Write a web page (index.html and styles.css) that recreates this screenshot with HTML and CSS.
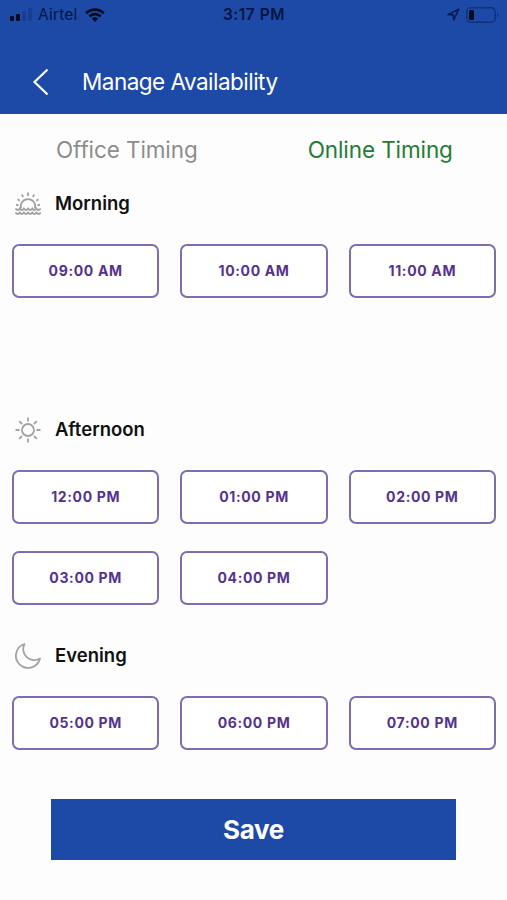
FILE: index.html
```html
<!DOCTYPE html>
<html lang="en">

<head>
    <meta charset="UTF-8">
    <meta name="viewport" content="width=device-width, initial-scale=1.0">
    <title>Manage Availability</title>
    <link rel="stylesheet" href="styles.css">
</head>
<body>
    <header class="header">
        <div class="status-bar">
            <div class="status-left">
                <svg class="signal" width="23" height="13" viewBox="0 0 23 13">
                    <rect x="0" y="8" width="4" height="5" rx="1"/>
                    <rect x="6" y="6" width="4" height="7" rx="1"/>
                    <rect class="dim" x="12" y="3" width="4" height="10" rx="1"/>
                    <rect class="dim" x="18" y="0" width="4" height="13" rx="1"/>
                </svg>
                <span class="carrier">Airtel</span>
                <svg class="wifi" width="20" height="14" viewBox="0 0 20 14">
                    <path d="M1.2 5.2a12.6 12.6 0 0 1 17.6 0M4.3 8.4a8.2 8.2 0 0 1 11.4 0" fill="none" stroke="#030b22" stroke-width="2.6"/>
                    <path d="M10 14l-3.3-3.4a4.8 4.8 0 0 1 6.6 0z"/>
                </svg>
            </div>
            <span class="clock">3:17 PM</span>
            <div class="status-right">
                <svg class="location" width="13" height="13" viewBox="0 0 13 13">
                    <path d="M1 6.6L11.6 1.2 6.8 12 6.3 6.9z" fill="none" stroke="#0a1d50" stroke-width="1.6" stroke-linejoin="round"/>
                </svg>
                <svg class="battery" width="33" height="16" viewBox="0 0 33 16">
                    <rect x=".8" y=".8" width="28.4" height="14.4" rx="4" fill="none" stroke="#133178" stroke-width="1.5"/>
                    <rect x="3" y="3" width="5" height="10" rx="1.5"/>
                    <path d="M31 5.500c2 .8 2 4.200 0 5z" fill="#133178"/>
                </svg>
            </div>
        </div>
        <div class="nav">
            <svg class="back" width="18" height="28" viewBox="0 0 18 28">
                <path d="M15.500 1.500L2.500 14l13 12.500" fill="none" stroke="#fff" stroke-width="2.2"/>
            </svg>
            <h1>Manage Availability</h1>
        </div>
    </header>

    <div class="tabs">
        <div class="tab">Office Timing</div>
        <div class="tab active">Online Timing</div>
    </div>

    <div class="section">
        <div class="section-title">
            <svg class="icon" width="28" height="28" viewBox="0 0 28 28">
                <path d="M7 18.500a7.300 7.300 0 1 1 14 0"/>
                <path d="M14 2.500v3.500M7.800 4.500l1.300 2.700M20.200 4.500l-1.300 2.700M3.500 9.200l2.300 1.500M24.500 9.200l-2.300 1.500M2 15h2.500M26 15h-2.500"/>
                <path d="M1.500 18.500q2.100 3 4.200 0q2.100 3 4.200 0q2.100 3 4.200 0q2.100 3 4.200 0q2.100 3 4.200 0q2.100 3 4.200 0M1.500 22.500q2.100 3 4.200 0q2.100 3 4.200 0q2.100 3 4.200 0q2.100 3 4.200 0q2.100 3 4.200 0q2.100 3 4.200 0"/>
            </svg>
            <h2>Morning</h2>
        </div>
        <div class="slots">
            <button>09:00 AM</button>
            <button>10:00 AM</button>
            <button>11:00 AM</button>
        </div>
    </div>

    <div class="section">
        <div class="section-title">
            <svg class="icon" width="28" height="28" viewBox="0 0 28 28">
                <circle cx="14" cy="14" r="6"/>
                <path d="M14 1.500v4M14 22.500v4M1.500 14h4M22.500 14h4M5.200 5.200l2.800 2.800M20 20l2.800 2.800M5.200 22.800L8 20M20 8l2.800-2.800"/>
            </svg>
            <h2>Afternoon</h2>
        </div>
        <div class="slots">
            <button>12:00 PM</button>
            <button>01:00 PM</button>
            <button>02:00 PM</button>
            <button>03:00 PM</button>
            <button>04:00 PM</button>
        </div>
    </div>

    <div class="section">
        <div class="section-title">
            <svg class="icon" width="28" height="28" viewBox="0 0 28 28">
                <path d="M10.500 2A12.200 12.200 0 1 0 26 16.500A11 11 0 0 1 10.500 2z" stroke-linejoin="round"/>
            </svg>
            <h2>Evening</h2>
        </div>
        <div class="slots">
            <button>05:00 PM</button>
            <button>06:00 PM</button>
            <button>07:00 PM</button>
        </div>
    </div>

    <button class="save">Save</button>
</body>
</html>
```
FILE: styles.css
```css
* {
    box-sizing: border-box;
}

body {
    display: flex;
    flex-direction: column;
    height: 900px;
    margin: 0;
    font-family: Inter, "Liberation Sans", sans-serif;
    background: #fdfdfd;
}

h1, h2 {
    margin: 0;
}

.header {
    height: 114px;
    background: #1d49a7;
    color: #fff;
}

.status-bar {
    display: grid;
    grid-template-columns: 1fr auto 1fr;
    align-items: center;
    height: 29px;
    padding: 0 8px 0 10px;
    color: #06163f;
    fill: #030b22;
    font-size: 15.5px;
}

.status-left, .status-right {
    display: flex;
    align-items: center;
}

.status-right {
    justify-content: flex-end;
    gap: 6px;
}

.signal .dim {
    fill: #183e92;
}

.carrier {
    margin: 0 7px 0 5px;
    letter-spacing: 0.2px;
}

.clock {
    font-weight: 600;
    letter-spacing: 0.5px;
    margin-right: 1px;
}

.nav {
    display: flex;
    align-items: center;
    height: 105px;
    padding-left: 32px;
}

.nav h1 {
    margin-left: 32px;
    padding-bottom: 1px;
    font-size: 22.5px;
    font-weight: 400;
    letter-spacing: -0.52px;
}

.tabs {
    display: flex;
    height: 72px;
    align-items: center;
    padding-bottom: 2px;
}

.tab {
    flex: 1;
    text-align: center;
    font-size: 22.5px;
    letter-spacing: -0.1px;
    color: #8d8d8d;
}

.tab.active {
    color: #237c33;
}

.section {
    height: 226px;
    padding: 0 11px 0 12px;
}

.section-title {
    display: flex;
    align-items: center;
    height: 36px;
    margin-bottom: 22px;
    padding-left: 2px;
}

.section-title h2 {
    margin-left: 13px;
    padding-bottom: 2px;
    font-size: 18.5px;
    font-weight: 600;
    color: #111;
}

.icon {
    fill: none;
    stroke: #a3a3a3;
    stroke-width: 1.8;
}

.slots {
    display: grid;
    grid-template-columns: repeat(3, 1fr);
    gap: 27px 21px;
}

.slots button {
    height: 54px;
    padding: 0 0 1px;
    border: 2px solid #806db1;
    border-radius: 7px;
    background: #fff;
    color: #563290;
    font-family: inherit;
    font-size: 14px;
    font-weight: 700;
    letter-spacing: 0.65px;
}

.save {
    width: 405px;
    height: 61px;
    margin: -65px 0 0 51px;
    border: none;
    background: #1d49a7;
    color: #fff;
    font-family: inherit;
    font-size: 26px;
    font-weight: 700;
    letter-spacing: -0.3px;
}
```
